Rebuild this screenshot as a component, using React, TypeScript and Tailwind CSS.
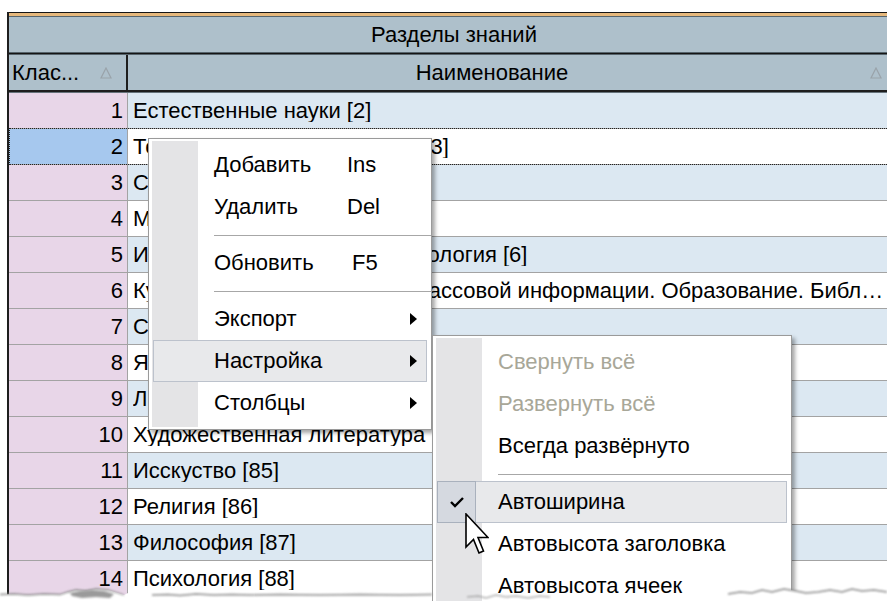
import React from "react";

type Row = { n: number; name: string };

const rows: Row[] = [
  { n: 1, name: "Естественные науки [2]" },
  { n: 2, name: "Техника. Технические науки [3]" },
  { n: 3, name: "Сельское хозяйство [4]" },
  { n: 4, name: "Медицинские науки [5]" },
  { n: 5, name: "История. Социология. Политология [6]" },
  { n: 6, name: "Культура. Наука. Средства массовой информации. Образование. Библиотечное дело [7]" },
  { n: 7, name: "Спорт [75]" },
  { n: 8, name: "Языкознание [81]" },
  { n: 9, name: "Литературоведение [83]" },
  { n: 10, name: "Художественная литература [84]" },
  { n: 11, name: "Исскуство [85]" },
  { n: 12, name: "Религия [86]" },
  { n: 13, name: "Философия [87]" },
  { n: 14, name: "Психология [88]" },
];

function SortMark() {
  return (
    <svg width="12" height="12" viewBox="0 0 12 12">
      <path d="M6 1 L11 11 L1 11 Z" fill="none" stroke="#9aa3aa" strokeWidth="1.2" />
    </svg>
  );
}

function SubArrow() {
  return (
    <svg width="7" height="12" viewBox="0 0 7 12">
      <path d="M0 0 L7 6 L0 12 Z" fill="#000" />
    </svg>
  );
}

type ItemProps = {
  label: string;
  shortcut?: string;
  shortcutPad?: string;
  arrow?: boolean;
  disabled?: boolean;
  active?: boolean;
  checked?: boolean;
  labelWidth?: string;
};

function MenuItem({ label, shortcut, shortcutPad, arrow, disabled, active, checked, labelWidth }: ItemProps) {
  return (
    <div
      className={`mx-[2px] flex h-[42px] items-center border ${
        active ? "border-[#bcc2cc] bg-[#e8e9eb]" : "border-transparent"
      }`}
    >
      {checked ? (
        <div className="-my-px -ml-px flex h-[42px] w-[39px] items-center justify-center border border-[#a9b1bd] bg-[#d5d9e0]">
          <svg width="16" height="12" viewBox="0 0 16 12">
            <path d="M2 6 L6 10 L14 2" fill="none" stroke="#000" strokeWidth="2.4" />
          </svg>
        </div>
      ) : (
        <div className="w-[38px]" />
      )}
      <span
        className={`pl-[22px] whitespace-nowrap ${labelWidth ?? ""} ${
          disabled ? "text-[#a8a798]" : "text-black"
        }`}
      >
        {label}
      </span>
      {shortcut && <span className={`whitespace-nowrap ${shortcutPad ?? ""}`}>{shortcut}</span>}
      {arrow && (
        <span className="ml-auto mr-[9px] flex items-center">
          <SubArrow />
        </span>
      )}
    </div>
  );
}

function Separator() {
  return (
    <div className="-mr-[2px] flex h-[14px] items-center pl-[63px]">
      <div className="h-px flex-1 bg-[#a7a7a7]" />
    </div>
  );
}

function MenuFrame({ className, children }: { className: string; children: React.ReactNode }) {
  return (
    <div
      className={`absolute border border-[#9a9a9a] bg-white p-[2px] shadow-[3px_3px_4px_rgba(0,0,0,0.35)] ${className}`}
    >
      <div className="bg-[linear-gradient(90deg,#fff_1px,#e4e4e6_1px,#e4e4e6_47px,#fff_47px)] py-[3px]">
        {children}
      </div>
    </div>
  );
}

export default function App() {
  return (
    <div className="relative h-[601px] w-[887px] overflow-hidden bg-white font-['Liberation_Sans',Arial,sans-serif] text-[22px] leading-none text-black">
      {/* grid */}
      <div className="ml-[7px] mt-[12px] w-[892px] border-l-2 border-[#1e1e1e]">
        <div className="h-px bg-[#151515]" />
        <div className="h-[3px] bg-[#e6b87c]" />
        <div className="h-px bg-[#56646c]" />
        <div className="flex h-[35px] items-center justify-center bg-[#aec0cb]">Разделы знаний</div>
        <div className="h-px bg-[#56646c]" />
        <div className="h-px bg-[#151515]" />
        <div className="h-px bg-[#56646c]" />
        <div className="flex h-[35px] bg-[#aec0cb]">
          <div className="flex w-[119px] items-center border-r-2 border-[#1e1e1e] pl-[3px]">
            <span className="whitespace-nowrap">Клас...</span>
            <span className="ml-auto mr-[14px] flex items-center">
              <SortMark />
            </span>
          </div>
          <div className="flex flex-1 items-center">
            <span className="w-[728px] text-center">Наименование</span>
            <span className="flex items-center pl-[14px]">
              <SortMark />
            </span>
          </div>
        </div>
        <div className="h-[2px] bg-[#1e1e1e]" />
        <div className="h-px bg-[#66737b]" />

        {rows.map((r) => {
          const selected = r.n === 2;
          const striped = r.n % 2 === 1;
          return (
            <div key={r.n} className="relative flex h-[36px] border-b border-[#a3a3a3]">
              <div
                className={`flex w-[119px] items-center justify-end border-r border-[#a3a3a3] pr-[4px] ${
                  selected ? "bg-[#a6c8ee]" : "bg-[#e8d6e8]"
                }`}
              >
                {r.n}
              </div>
              <div
                className={`flex min-w-0 flex-1 items-center pl-[5px] pr-[14px] ${
                  striped ? "bg-[#dce8f2]" : "bg-white"
                }`}
              >
                <span className="truncate">{r.name}</span>
              </div>
              {selected && (
                <div className="pointer-events-none absolute -top-px bottom-[-1px] left-0 right-0 border border-dotted border-[#222]" />
              )}
            </div>
          );
        })}
      </div>

      {/* context menu */}
      <MenuFrame className="left-[148px] top-[138px] w-[284px]">
        <MenuItem label="Добавить" shortcut="Ins" labelWidth="w-[155px]" />
        <MenuItem label="Удалить" shortcut="Del" labelWidth="w-[155px]" />
        <Separator />
        <MenuItem label="Обновить" shortcut="F5" shortcutPad="pl-[5px]" labelWidth="w-[155px]" />
        <Separator />
        <MenuItem label="Экспорт" arrow />
        <MenuItem label="Настройка" arrow active />
        <MenuItem label="Столбцы" arrow />
      </MenuFrame>

      {/* settings submenu */}
      <MenuFrame className="left-[432px] top-[335px] w-[360px]">
        <MenuItem label="Свернуть всё" disabled />
        <MenuItem label="Развернуть всё" disabled />
        <MenuItem label="Всегда развёрнуто" />
        <Separator />
        <MenuItem label="Автоширина" active checked />
        <MenuItem label="Автовысота заголовка" />
        <MenuItem label="Автовысота ячеек" />
      </MenuFrame>

      {/* mouse pointer */}
      <svg className="absolute left-[465px] top-[513px]" width="24" height="42" viewBox="0 0 24 42">
        <path
          d="M1 1 L1 34 L8.5 26.5 L14 40 L18.5 38 L13 24.5 L23 24.5 Z"
          fill="#fff"
          stroke="#000"
          strokeWidth="1.6"
          strokeLinejoin="miter"
        />
      </svg>

      {/* torn bottom edge */}
      <svg className="absolute left-0 top-[584px]" width="887" height="17" viewBox="0 0 887 17">
        <defs>
          <filter id="tearBlur" x="-10%" y="-50%" width="120%" height="200%">
            <feGaussianBlur stdDeviation="0.9" />
          </filter>
        </defs>
        <path
          d="M0 10.5 L14 10 L28 11 L44 10 L60 10.5 L68 8 L76 6 L86 7 L96 5 L108 6 L118 9 L124 11 L130 8 L138 7 L146 9 L152 11 L168 10.5 L180 11.5 L196 10 L214 11 L232 10.5 L250 11 L280 10.5 L320 11 L360 10.5 L400 11 L432 10.5 L432 17 L0 17 Z"
          fill="#fff"
        />
        <path
          d="M0 10.5 L14 10 L28 11 L44 10 L60 10.5 L68 8 L76 6 L86 7 L96 5 L108 6 L118 9 L124 11 M152 11 L168 10.5 L180 11.5 L196 10 L214 11 L232 10.5 L250 11 L280 10.5 L320 11 L360 10.5 L400 11 L432 10.5"
          fill="none"
          stroke="#8a8a8a"
          strokeWidth="1.3"
          filter="url(#tearBlur)"
        />
        <path d="M70 9 L80 7 L92 6 L104 7 L114 10 L110 14 L96 13 L82 14 L72 12 Z" fill="#9a9a9a" filter="url(#tearBlur)" />
        <path
          d="M467 13 L478 12 L486 14 L496 11 L506 13 L516 12 L528 14 L540 12 L550 13"
          fill="none"
          stroke="#8e8e8e"
          strokeWidth="1.2"
          filter="url(#tearBlur)"
        />
        <path
          d="M728 10 L740 8 L752 9 L762 6 L772 8 L784 5 L796 7 L806 9 L818 8 L830 6 L842 8 L852 5 L862 7 L874 6 L887 8 L887 17 L728 17 Z"
          fill="#fff"
        />
        <path
          d="M728 10 L740 8 L752 9 L762 6 L772 8 L784 5 L796 7 L806 9 L818 8 L830 6 L842 8 L852 5 L862 7 L874 6 L887 8"
          fill="none"
          stroke="#8a8a8a"
          strokeWidth="1.4"
          filter="url(#tearBlur)"
        />
      </svg>
    </div>
  );
}
